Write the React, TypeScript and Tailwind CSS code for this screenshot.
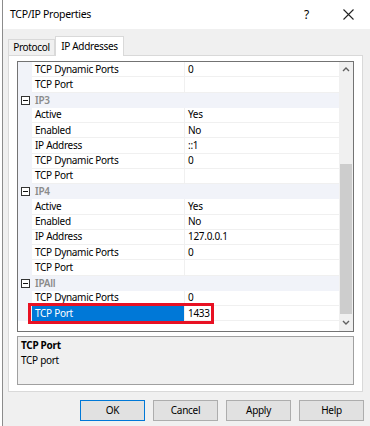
import React from "react"

type Row = { cat?: string; n?: string; v?: string; sel?: boolean }

const rows: Row[] = [
  { n: "TCP Dynamic Ports", v: "0" },
  { n: "TCP Port", v: "" },
  { cat: "IP3" },
  { n: "Active", v: "Yes" },
  { n: "Enabled", v: "No" },
  { n: "IP Address", v: "::1" },
  { n: "TCP Dynamic Ports", v: "0" },
  { n: "TCP Port", v: "" },
  { cat: "IP4" },
  { n: "Active", v: "Yes" },
  { n: "Enabled", v: "No" },
  { n: "IP Address", v: "127.0.0.1" },
  { n: "TCP Dynamic Ports", v: "0" },
  { n: "TCP Port", v: "" },
  { cat: "IPAll" },
  { n: "TCP Dynamic Ports", v: "0" },
  { n: "TCP Port", v: "1433", sel: true },
]

function MinusBox() {
  return (
    <svg width="9" height="9" viewBox="0 0 9 9">
      <rect x="0.5" y="0.5" width="8" height="8" fill="white" stroke="#333" />
      <line x1="2" y1="4.5" x2="7" y2="4.5" stroke="#111" />
    </svg>
  )
}

function GridRow({ row }: { row: Row }) {
  if (row.cat) {
    return (
      <div className="flex h-[15.25px] items-center bg-[#f1f3f9]">
        <div className="flex w-[14px] justify-center pl-[1px]">
          <MinusBox />
        </div>
        <span className="pl-[3px] font-semibold text-[#8a8a8a]">{row.cat}</span>
      </div>
    )
  }
  return (
    <div className="flex h-[15.25px]">
      <div className="w-[14px] bg-[#f1f3f9]" />
      <div
        className={
          row.sel
            ? "flex w-[152px] items-center bg-[#0078d7] pl-[3px] text-white"
            : "flex w-[152px] items-center border-b border-[#f0f0f0] pl-[3px]"
        }
      >
        {row.n}
      </div>
      <div className="flex flex-1 items-center border-b border-l border-[#f0f0f0] pl-[3px]">
        {row.v}
        {row.sel && <span className="ml-[1px] h-[13px] w-[1px] bg-black" />}
      </div>
    </div>
  )
}

function Chevron({ up }: { up?: boolean }) {
  return (
    <svg width="8" height="6" viewBox="0 0 8 6">
      <path
        d={up ? "M1 5 L4 2 L7 5" : "M1 1 L4 4 L7 1"}
        fill="none"
        stroke="#606060"
        strokeWidth="1.4"
      />
    </svg>
  )
}

export default function App() {
  return (
    <div
      className="flex h-[426px] w-[370px] overflow-hidden bg-white pl-[2px] text-[10px] tracking-[-0.3px] text-black"
      style={{ fontFamily: '"Noto Sans", "Open Sans", sans-serif' }}
    >
      <div className="flex flex-1 flex-col border-l border-[#8c8c8c]">
        {/* title bar */}
        <div className="flex h-[29px] shrink-0 items-center bg-white pl-[7px] text-[10.5px]">
          <span>TCP/IP Properties</span>
          <span className="ml-auto mr-[34px] text-[12px]">?</span>
          <svg width="11" height="11" viewBox="0 0 11 11" className="mr-[16px]">
            <path d="M0.5 0.5 L10.5 10.5 M10.5 0.5 L0.5 10.5" stroke="#222" strokeWidth="1.1" />
          </svg>
        </div>

        <div className="flex flex-1 flex-col bg-[#f0f0f0]">
          {/* tabs */}
          <div className="ml-[5px] mt-[6px] flex h-[20px] items-end">
            <div className="flex h-[16px] w-[47px] items-center justify-center border border-b-0 border-[#d9d9d9] bg-[#f0f0f0]">
              Protocol
            </div>
            <div className="relative z-10 -mb-[1px] flex h-[20px] w-[69px] items-center justify-center border border-b-0 border-[#d9d9d9] bg-white">
              IP Addresses
            </div>
          </div>

          {/* tab panel */}
          <div className="ml-[5px] flex h-[337px] w-[355px] flex-col border border-[#d9d9d9] bg-white px-[8px] pt-[5px]">
            <div className="relative flex h-[271px] border border-[#737373] bg-white">
              <div className="flex flex-1 flex-col overflow-hidden">
                {rows.map((r, i) => (
                  <GridRow key={i} row={r} />
                ))}
              </div>
              <div className="flex w-[14px] flex-col items-center bg-[#f0f0f0]">
                <div className="flex h-[14px] items-center">
                  <Chevron up />
                </div>
                <div className="mt-[88px] h-[150px] w-[12px] bg-[#cdcdcd]" />
                <div className="flex flex-1 items-center">
                  <Chevron />
                </div>
              </div>
              <div className="absolute left-[10px] top-[241px] h-[21px] w-[186px] border-[3px] border-[#e81123]" />
            </div>

            <div className="mt-[4px] flex h-[49px] flex-col border border-[#a0a0a0] bg-[#f0f0f0] px-[3px] pt-[1px]">
              <span className="font-bold">TCP Port</span>
              <span>TCP port</span>
            </div>
          </div>

          {/* buttons */}
          <div className="mr-[6px] mt-[8px] flex justify-end gap-[8px]">
            <button className="h-[21px] w-[65px] border border-[#0078d7] bg-[#e1e1e1]">OK</button>
            <button className="h-[21px] w-[65px] border border-[#adadad] bg-[#e1e1e1]">Cancel</button>
            <button className="h-[21px] w-[65px] border border-[#adadad] bg-[#e1e1e1]">Apply</button>
            <button className="h-[21px] w-[65px] border border-[#adadad] bg-[#e1e1e1]">Help</button>
          </div>
        </div>
      </div>
    </div>
  )
}
